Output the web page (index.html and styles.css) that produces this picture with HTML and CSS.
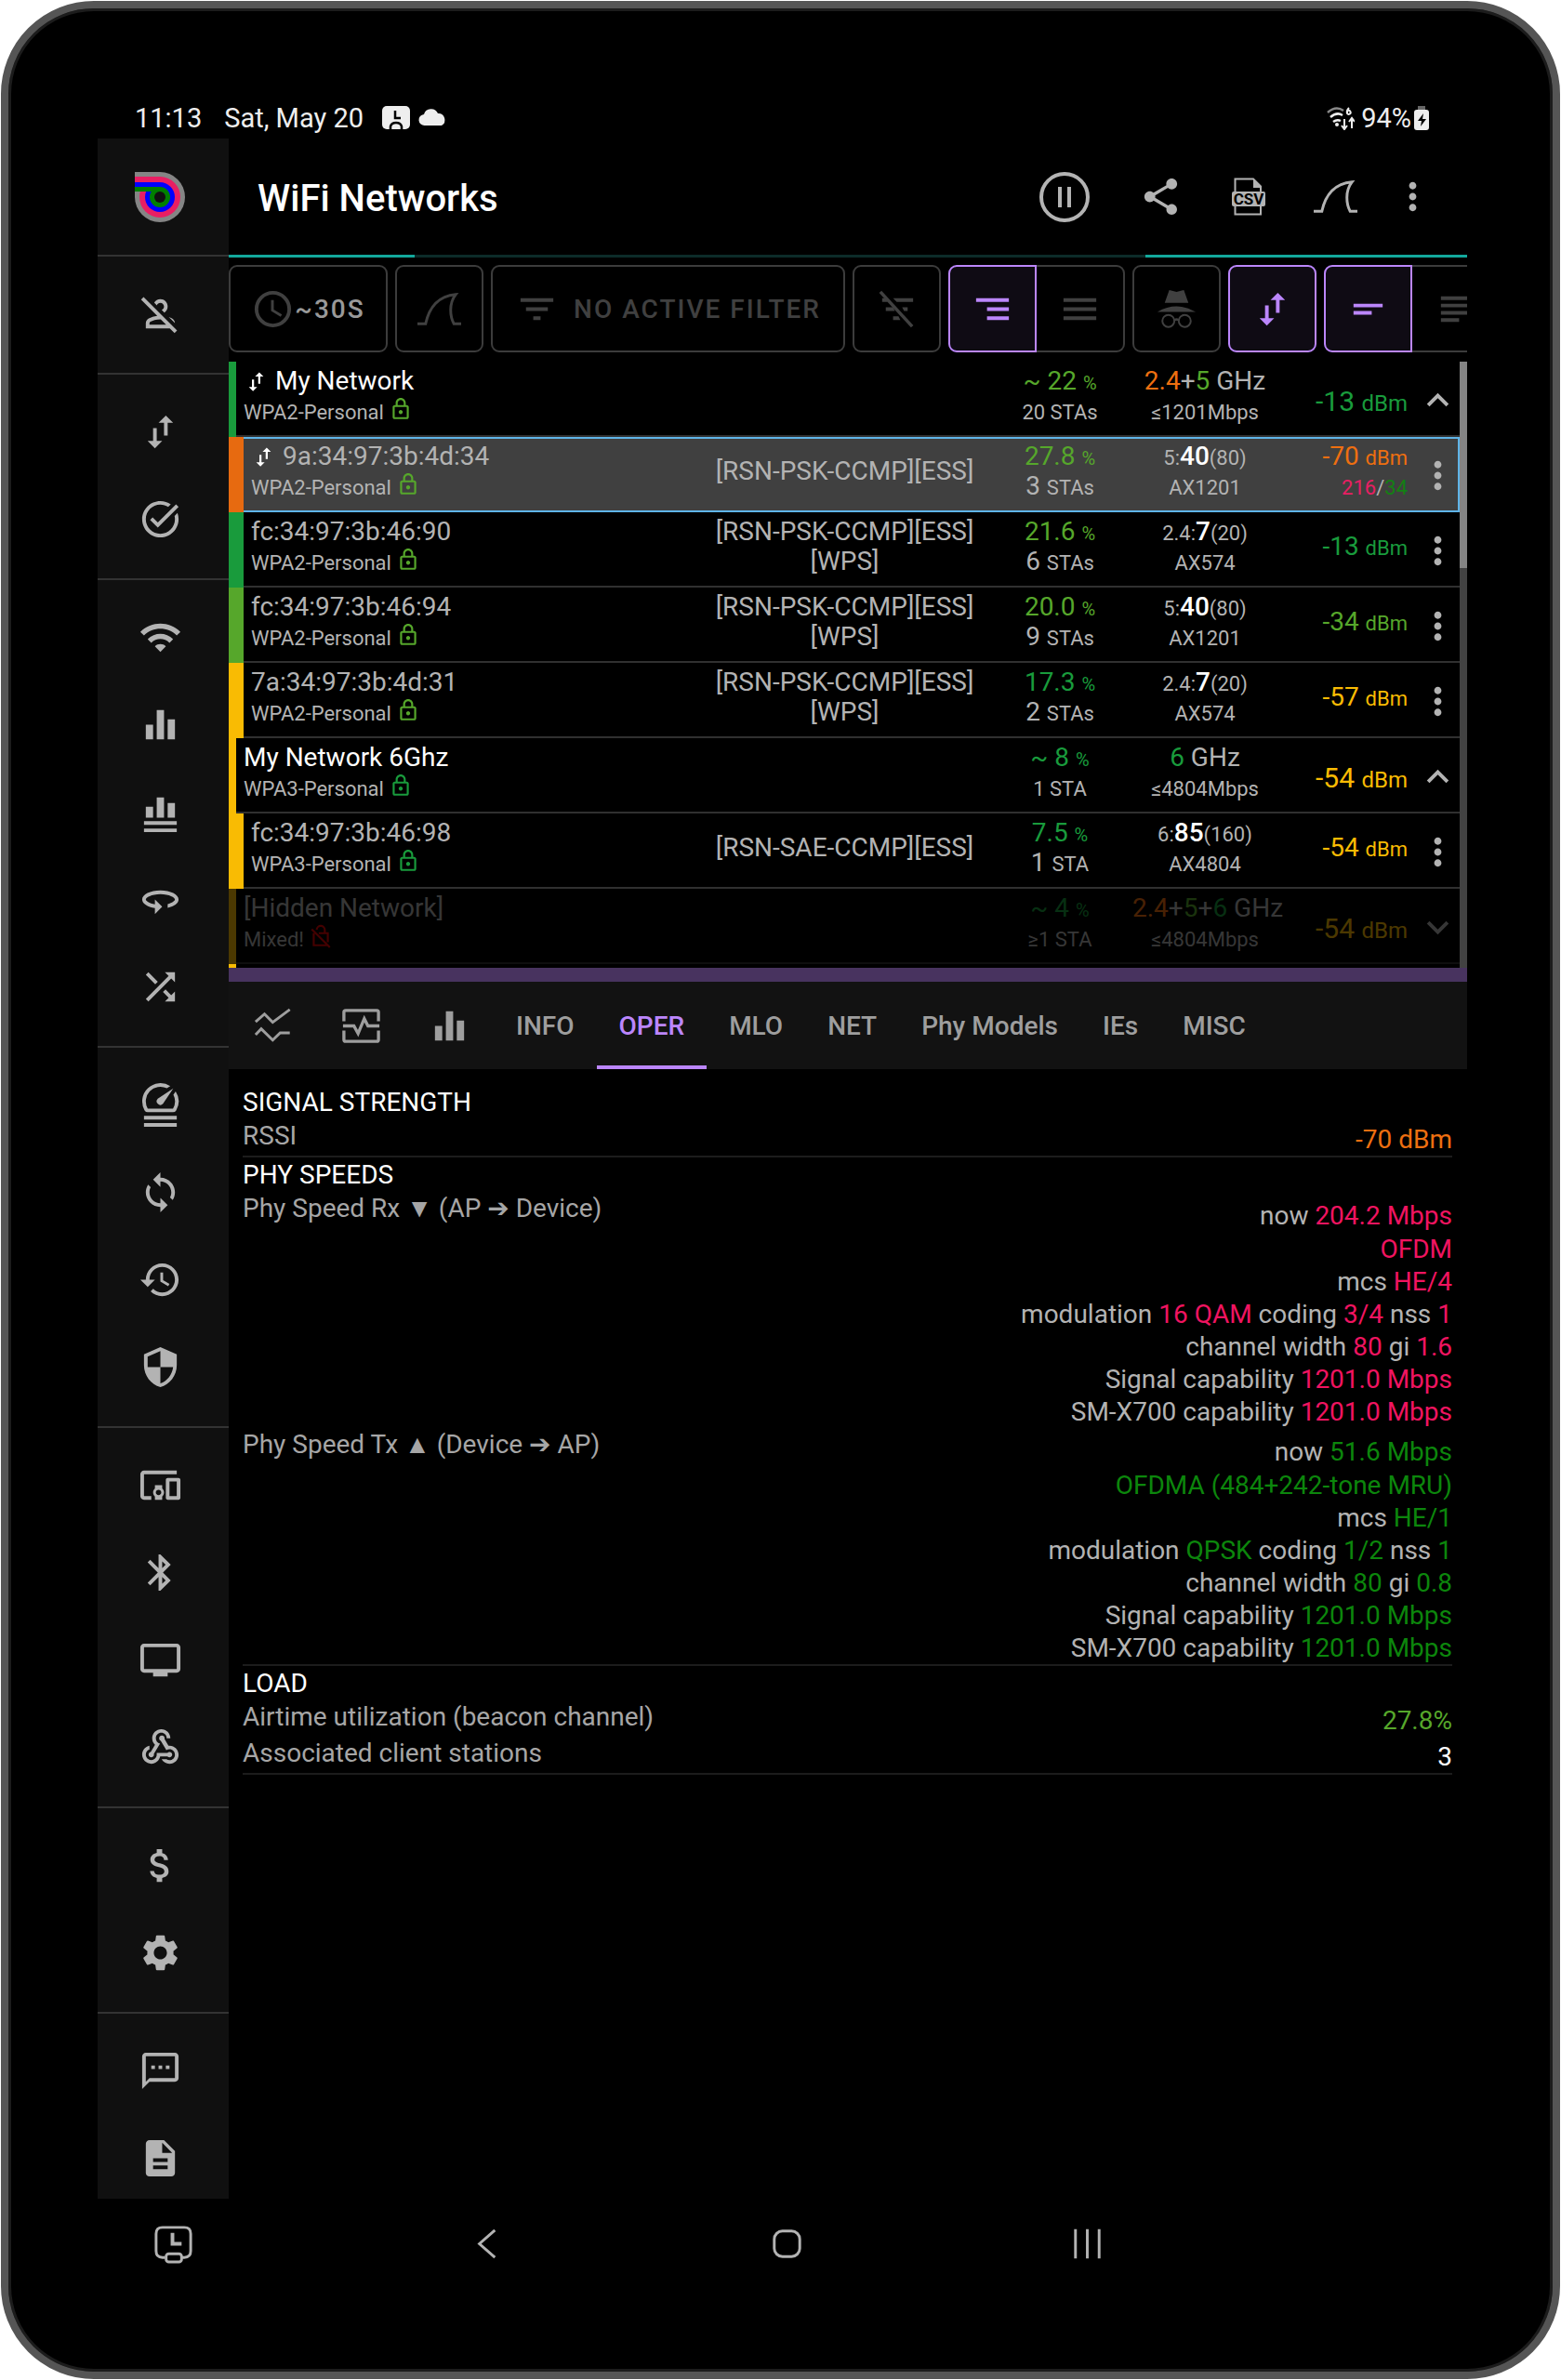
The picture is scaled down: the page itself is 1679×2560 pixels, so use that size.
FILE: index.html
```
<!DOCTYPE html>
<html lang="en">
<head>
    <meta charset="utf-8">
    <title>WiFi Networks</title>
    <link rel="stylesheet" href="styles.css">
</head>
<body>
    <!-- icon sprite -->
    <svg class="sprite">
        <symbol id="person-off" viewBox="0 0 24 24"><path d="M20 17.17l-3.37-3.38c.64.22 1.23.48 1.77.76.97.51 1.58 1.52 1.6 2.62zm1.19 4.02l-1.41 1.41-2.61-2.6H4v-2.78c0-1.12.61-2.15 1.61-2.66 1.29-.66 2.87-1.22 4.67-1.45L1.39 4.22 2.8 2.81l18.39 18.38zM15.17 18l-3-3H12c-2.37 0-4.29.73-5.48 1.34-.32.16-.52.5-.52.88V18h9.17zM12 6c1.1 0 2 .9 2 2 0 .86-.54 1.59-1.3 1.87l1.48 1.48c1.09-.74 1.82-1.99 1.82-3.35 0-2.21-1.79-4-4-4-1.43 0-2.7.76-3.4 1.89l1.48 1.48C10.36 6.57 11.1 6 12 6z"/></symbol>
        <symbol id="swap" viewBox="0 0 24 24"><path d="M15 3l-4 4h3v7h2V7h3zM10 17v-7H8v7H5l4 4 4-4z"/></symbol>
        <symbol id="task" viewBox="0 0 24 24"><path d="M22 5.18L10.59 16.6l-4.24-4.24 1.41-1.41 2.83 2.83 10-10L22 5.18zm-2.21 5.04c.13.57.21 1.17.21 1.78 0 4.42-3.58 8-8 8s-8-3.58-8-8 3.58-8 8-8c1.58 0 3.04.46 4.28 1.25l1.44-1.44C16.1 2.67 14.13 2 12 2 6.48 2 2 6.48 2 12s4.48 10 10 10 10-4.48 10-10c0-1.19-.22-2.33-.6-3.39l-1.61 1.61z"/></symbol>
        <symbol id="wifi" viewBox="0 0 24 24"><path d="M1 9l2 2c4.97-4.97 13.03-4.97 18 0l2-2C16.93 2.93 7.08 2.93 1 9zm8 8l3 3 3-3c-1.65-1.66-4.34-1.66-6 0zm-4-4l2 2c2.76-2.76 7.24-2.76 10 0l2-2C15.14 9.14 8.87 9.14 5 13z"/></symbol>
        <symbol id="bars" viewBox="0 0 24 24"><path d="M10 20h4V4h-4v16zm-6 0h4v-8H4v8zM16 9v11h4V9h-4z"/></symbol>
        <symbol id="bars-list" viewBox="0 0 24 24"><path d="M10 15h4V4h-4zM4 15h4V9H4zM16 7v8h4V7zM3 17h18v2H3zM3 21h18v2H3z"/></symbol>
        <symbol id="rotate" viewBox="0 0 24 24"><path d="M12 7C6.48 7 2 9.24 2 12c0 2.24 2.94 4.13 7 4.77V20l4-4-4-4v2.73c-3.15-.56-5-1.9-5-2.73 0-1.06 3.04-3 8-3s8 1.94 8 3c0 .73-1.46 1.89-4 2.53v2.05c3.53-.77 6-2.53 6-4.58 0-2.76-4.48-5-10-5z"/></symbol>
        <symbol id="shuffle" viewBox="0 0 24 24"><path d="M10.59 9.17L5.41 4 4 5.41l5.17 5.17 1.42-1.41zM14.5 4l2.04 2.04L4 18.59 5.41 20 17.96 7.46 20 9.5V4h-5.5zm.33 9.41l-1.41 1.41 3.13 3.13L14.5 20H20v-5.5l-2.04 2.04-3.13-3.13z"/></symbol>
        <symbol id="speed-list" viewBox="0 0 24 24"><path transform="translate(0 -4)" d="M20.38 8.57l-1.23 1.85a8 8 0 0 1-.22 7.58H5.07A8 8 0 0 1 15.58 6.85l1.85-1.23A10 10 0 0 0 3.35 19a2 2 0 0 0 1.72 1h13.85a2 2 0 0 0 1.74-1 10 10 0 0 0-.27-10.44zm-9.79 6.84a2 2 0 0 0 2.83 0l5.66-8.49-8.49 5.66a2 2 0 0 0 0 2.83z"/><path d="M3 18h18v2H3zM3 22h18v2H3z"/></symbol>
        <symbol id="sync" viewBox="0 0 24 24"><path d="M12 4V1L8 5l4 4V6c3.31 0 6 2.69 6 6 0 1.01-.25 1.97-.7 2.8l1.46 1.46C19.54 15.03 20 13.57 20 12c0-4.42-3.58-8-8-8zm0 14c-3.31 0-6-2.69-6-6 0-1.01.25-1.97.7-2.8L5.24 7.74C4.46 8.97 4 10.43 4 12c0 4.42 3.58 8 8 8v3l4-4-4-4v3z"/></symbol>
        <symbol id="history" viewBox="0 0 24 24"><path d="M13 3c-4.97 0-9 4.03-9 9H1l3.89 3.89.07.14L9 12H6c0-3.87 3.13-7 7-7s7 3.13 7 7-3.13 7-7 7c-1.93 0-3.68-.79-4.94-2.06l-1.42 1.42C8.27 19.99 10.51 21 13 21c4.97 0 9-4.03 9-9s-4.03-9-9-9zm-1 5v5l4.28 2.54.72-1.21-3.5-2.08V8H12z"/></symbol>
        <symbol id="shield" viewBox="0 0 24 24"><path d="M12 1L3 5v6c0 5.55 3.84 10.74 9 12 5.16-1.26 9-6.45 9-12V5l-9-4zm0 10.99h7c-.53 4.12-3.28 7.79-7 8.94V12H5V6.3l7-3.11v8.8z"/></symbol>
        <symbol id="devices" viewBox="0 0 24 24"><path d="M3 6h18V4H3c-1.1 0-2 .9-2 2v12c0 1.1.9 2 2 2h4v-2H3V6zm10 6H9v1.78c-.61.55-1 1.33-1 2.22s.39 1.67 1 2.22V20h4v-1.78c.61-.55 1-1.34 1-2.22s-.39-1.67-1-2.22V12zm-2 5.5c-.83 0-1.5-.67-1.5-1.5s.67-1.5 1.5-1.5 1.5.67 1.5 1.5-.67 1.5-1.5 1.5zM22 8h-6c-.5 0-1 .5-1 1v10c0 .5.5 1 1 1h6c.5 0 1-.5 1-1V9c0-.5-.5-1-1-1zm-1 10h-4v-8h4v8z"/></symbol>
        <symbol id="bluetooth" viewBox="0 0 24 24"><path d="M17.71 7.71L12 2h-1v7.59L6.41 5 5 6.41 10.59 12 5 17.59 6.41 19 11 14.41V22h1l5.71-5.71-4.3-4.29 4.3-4.29zM13 5.83l1.88 1.88L13 9.59V5.83zm1.88 10.46L13 18.17v-3.76l1.88 1.88z"/></symbol>
        <symbol id="monitor" viewBox="0 0 24 24"><path d="M21 3H3c-1.1 0-2 .9-2 2v12c0 1.1.9 2 2 2h5v2h8v-2h5c1.1 0 2-.9 2-2V5c0-1.1-.9-2-2-2zm0 14H3V5h18v12z"/></symbol>
        <symbol id="webhook" viewBox="0 0 24 24"><path d="M10 15h5.88c.27-.31.67-.5 1.12-.5.83 0 1.5.67 1.5 1.5s-.67 1.5-1.5 1.5c-.44 0-.84-.19-1.12-.5H11.9c-.46 2.28-2.48 4-4.9 4-2.76 0-5-2.24-5-5 0-2.42 1.72-4.44 4-4.9v2.07c-1.16.41-2 1.53-2 2.83 0 1.65 1.35 3 3 3s3-1.35 3-3v-1zm2.5-11c1.65 0 3 1.35 3 3h2c0-2.76-2.24-5-5-5s-5 2.24-5 5c0 1.43.6 2.71 1.55 3.62l-2.35 3.9c-.68.14-1.2.75-1.2 1.48 0 .83.67 1.5 1.5 1.5s1.5-.67 1.5-1.5c0-.16-.02-.31-.07-.45l3.38-5.63C10.49 9.61 9.5 8.42 9.5 7c0-1.65 1.35-3 3-3zm4.5 9c-.64 0-1.23.2-1.72.54l-3.05-5.07c-.53-.28-.9-.83-.9-1.47 0-.83.67-1.5 1.5-1.5s1.5.67 1.5 1.5c0 .15-.02.29-.06.43l2.19 3.65c.18-.02.36-.03.54-.03 2.76 0 5 2.24 5 5s-2.24 5-5 5c-1.85 0-3.47-1.01-4.33-2.5h2.67c.48.32 1.05.5 1.66.5 1.65 0 3-1.35 3-3s-1.35-3-3-3z"/></symbol>
        <symbol id="money" viewBox="0 0 24 24"><path d="M11.8 10.9c-2.27-.59-3-1.2-3-2.15 0-1.09 1.01-1.85 2.7-1.85 1.78 0 2.44.85 2.5 2.1h2.21c-.07-1.72-1.12-3.3-3.21-3.81V3h-3v2.16c-1.94.42-3.5 1.68-3.5 3.61 0 2.31 1.91 3.46 4.7 4.13 2.5.6 3 1.48 3 2.41 0 .69-.49 1.79-2.7 1.79-2.06 0-2.87-.92-2.98-2.1h-2.2c.12 2.19 1.76 3.42 3.68 3.83V21h3v-2.15c1.95-.37 3.5-1.5 3.5-3.55 0-2.84-2.43-3.81-4.7-4.4z"/></symbol>
        <symbol id="settings" viewBox="0 0 24 24"><path d="M19.14 12.94c.04-.3.06-.61.06-.94 0-.32-.02-.64-.07-.94l2.03-1.58c.18-.14.23-.41.12-.61l-1.92-3.32c-.12-.22-.37-.29-.59-.22l-2.39.96c-.5-.38-1.03-.7-1.62-.94l-.36-2.54c-.04-.24-.24-.41-.48-.41h-3.84c-.24 0-.43.17-.47.41l-.36 2.54c-.59.24-1.13.57-1.62.94l-2.39-.96c-.22-.08-.47 0-.59.22L2.74 8.87c-.12.21-.08.47.12.61l2.03 1.58c-.05.3-.09.63-.09.94s.02.64.07.94l-2.03 1.58c-.18.14-.23.41-.12.61l1.92 3.32c.12.22.37.29.59.22l2.39-.96c.5.38 1.03.7 1.62.94l.36 2.54c.05.24.24.41.48.41h3.84c.24 0 .44-.17.47-.41l.36-2.54c.59-.24 1.13-.56 1.62-.94l2.39.96c.22.08.47 0 .59-.22l1.92-3.32c.12-.22.07-.47-.12-.61l-2.01-1.58zM12 15.6c-1.98 0-3.6-1.62-3.6-3.6s1.62-3.6 3.6-3.6 3.6 1.62 3.6 3.6-1.62 3.6-3.6 3.6z"/></symbol>
        <symbol id="chat" viewBox="0 0 24 24"><path d="M20 2H4c-1.1 0-2 .9-2 2v18l4-4h14c1.1 0 2-.9 2-2V4c0-1.1-.9-2-2-2zm0 14H6l-2 2V4h16v12zM7 9h2v2H7zm4 0h2v2h-2zm4 0h2v2h-2z"/></symbol>
        <symbol id="doc" viewBox="0 0 24 24"><path d="M14 2H6c-1.1 0-1.99.9-1.99 2L4 20c0 1.1.89 2 1.99 2H18c1.1 0 2-.9 2-2V8l-6-6zm2 16H8v-2h8v2zm0-4H8v-2h8v2zm-3-5V3.5L18.5 9H13z"/></symbol>
        <symbol id="share" viewBox="0 0 24 24"><path d="M18 16.08c-.76 0-1.44.3-1.96.77L8.91 12.7c.05-.23.09-.46.09-.7s-.04-.47-.09-.7l7.05-4.11c.54.5 1.25.81 2.04.81 1.66 0 3-1.34 3-3s-1.34-3-3-3-3 1.34-3 3c0 .24.04.47.09.7L8.04 9.81C7.5 9.31 6.79 9 6 9c-1.66 0-3 1.34-3 3s1.34 3 3 3c.79 0 1.5-.31 2.04-.81l7.12 4.16c-.05.21-.08.43-.08.65 0 1.61 1.31 2.92 2.92 2.92s2.92-1.31 2.92-2.92-1.31-2.92-2.92-2.92z"/></symbol>
        <symbol id="more" viewBox="0 0 24 24"><path d="M12 8c1.1 0 2-.9 2-2s-.9-2-2-2-2 .9-2 2 .9 2 2 2zm0 2c-1.1 0-2 .9-2 2s.9 2 2 2 2-.9 2-2-.9-2-2-2zm0 6c-1.1 0-2 .9-2 2s.9 2 2 2 2-.9 2-2-.9-2-2-2z"/></symbol>
        <symbol id="less" viewBox="0 0 24 24"><path d="M12 8l-6 6 1.41 1.41L12 10.83l4.59 4.58L18 14z"/></symbol>
        <symbol id="expand" viewBox="0 0 24 24"><path d="M16.59 8.59L12 13.17 7.41 8.59 6 10l6 6 6-6z"/></symbol>
        <symbol id="lock" viewBox="0 0 24 24"><path d="M18 8h-1V6c0-2.76-2.24-5-5-5S7 3.24 7 6v2H6c-1.1 0-2 .9-2 2v10c0 1.1.9 2 2 2h12c1.1 0 2-.9 2-2V10c0-1.1-.9-2-2-2zM9 6c0-1.66 1.34-3 3-3s3 1.34 3 3v2H9V6zm9 14H6V10h12v10zm-6-3c1.1 0 2-.9 2-2s-.9-2-2-2-2 .9-2 2 .9 2 2 2z"/></symbol>
        <symbol id="no-lock" viewBox="0 0 24 24"><path d="M5 9v12h14M10 9h9v9M8 5.5a4 4 0 0 1 8 .5v3M3 5l18 18" fill="none" stroke="currentColor" stroke-width="2"/></symbol>
        <symbol id="fin" viewBox="0 0 48 36"><path d="M0 34h9C13 16 22 4 42 2C34 12 36 27 40 34h8" fill="none" stroke="currentColor" stroke-width="3"/></symbol>
        <symbol id="clock" viewBox="0 0 24 24"><path d="M12 2a10 10 0 1 0 0 20 10 10 0 0 0 0-20zm0 18a8 8 0 1 1 0-16 8 8 0 0 1 0 16zm.5-13H11v6l5.25 3.15.75-1.23-4.5-2.67z"/></symbol>
        <symbol id="filter" viewBox="0 0 24 24"><path d="M10 18h4v-2h-4v2zM3 6v2h18V6H3zm3 7h12v-2H6v2z"/></symbol>
        <symbol id="filter-off" viewBox="0 0 24 24"><path d="M10 6h11v2h-9zM4 6h2l1 2H4zM15 11h3v2h-2zM6 11h4l1 2H6zM10 16h3l1 2h-4z"/><path d="M3 2.5L20.5 21.5" stroke="currentColor" stroke-width="1.8"/></symbol>
        <symbol id="align-right" viewBox="0 0 24 24"><path d="M3 6h18v2H3zM9 11h12v2H9zM9 16h12v2H9z"/></symbol>
        <symbol id="menu" viewBox="0 0 24 24"><path d="M3 6h18v2H3zM3 11h18v2H3zM3 16h18v2H3z"/></symbol>
        <symbol id="incognito" viewBox="0 0 24 24"><path d="M8 1.5l4 1 4-1 2.500 7h-13zM1.500 13.500Q12 7.500 22.500 13.500z"/><path d="M11 18q1-.8 2 0" fill="none" stroke="currentColor" stroke-width="1.2"/><circle cx="7.5" cy="18.5" r="3.3" fill="none" stroke="currentColor" stroke-width="1"/><circle cx="16.5" cy="18.5" r="3.3" fill="none" stroke="currentColor" stroke-width="1"/></symbol>
        <symbol id="short-text" viewBox="0 0 24 24"><path d="M4 9h16v2H4zM4 13h10v2H4z"/></symbol>
        <symbol id="long-text" viewBox="0 0 24 24"><path d="M14 17H4v2h10v-2zm6-8H4v2h16V9zM4 15h16v-2H4v2zM4 5v2h16V5H4z"/></symbol>
    </svg>

    <div class="device">
        <div class="status">
            <span>11:13</span>
            <span class="date">Sat, May 20</span>
            <svg class="tray" viewBox="0 0 30 26"><rect width="30" height="25" rx="5" fill="#eee"/><path d="M14 5v8h6M9 25v-3q1-4 6-4t6 4v3" fill="none" stroke="#000" stroke-width="2.5"/></svg>
            <svg class="tray cloud" viewBox="0 0 30 26"><path d="M7 21a6 6 0 0 1-1-12 8 8 0 0 1 15-1 7 7 0 0 1 4 13z" fill="#eee"/></svg>
            <div class="right">
                <svg class="tray" viewBox="0 0 30 26"><g fill="none" stroke="#eee" stroke-width="2.5"><path d="M1 7Q10-1 18 5" stroke="#888"/><path d="M4 12q7-6 13-2M7 17q4-3 8-1"/><path d="M19 14v10M16 21l3 4 3-4M27 24V14M24 17l3-4 3 4" stroke-width="2"/><path d="M24 2q-3 3-2 6a2 2 0 1 0 1-3" stroke-width="2"/></g><circle cx="11" cy="20" r="2" fill="#eee"/></svg>
                <span>94%</span>
                <svg class="battery" viewBox="0 0 18 26"><rect x="5" width="8" height="5" fill="#666"/><rect x="1" y="4" width="16" height="22" rx="3" fill="#eee"/><path d="M11 8L5 16h4l-1 6 6-8h-4z" fill="#000"/></svg>
            </div>
        </div>

        <div class="app">
            <nav class="sidebar">
                <a href="#" class="logo" aria-label="Home">
                    <svg viewBox="0 0 54 54">
                        <rect width="27" height="27" fill="#858585"/><circle cx="27" cy="27" r="27" fill="#858585"/>
                        <circle cx="27" cy="27" r="22" fill="#e91e63"/><circle cx="27" cy="27" r="16" fill="#00f"/><circle cx="27" cy="27" r="11" fill="green"/>
                        <circle cx="27" cy="27" r="6" fill="#111"/>
                        <path d="M0 5h27v6H0z" fill="#e91e63"/><path d="M0 11h27v5H0z" fill="#00f"/><path d="M0 16h27v5H0z" fill="green"/>
                    </svg>
                </a>
                <div class="group">
                    <a href="#" aria-label="Account"><svg><use href="#person-off"/></svg></a>
                </div>
                <div class="group">
                    <a href="#" aria-label="Traffic"><svg><use href="#swap"/></svg></a>
                    <a href="#" aria-label="Checks"><svg><use href="#task"/></svg></a>
                </div>
                <div class="group">
                    <a href="#" aria-label="WiFi"><svg><use href="#wifi"/></svg></a>
                    <a href="#" aria-label="Channels"><svg><use href="#bars"/></svg></a>
                    <a href="#" aria-label="Channel list"><svg><use href="#bars-list"/></svg></a>
                    <a href="#" aria-label="Rotate"><svg><use href="#rotate"/></svg></a>
                    <a href="#" aria-label="Roaming"><svg><use href="#shuffle"/></svg></a>
                </div>
                <div class="group">
                    <a href="#" aria-label="Speed test"><svg><use href="#speed-list"/></svg></a>
                    <a href="#" aria-label="Sync"><svg><use href="#sync"/></svg></a>
                    <a href="#" aria-label="History"><svg><use href="#history"/></svg></a>
                    <a href="#" aria-label="Security"><svg><use href="#shield"/></svg></a>
                </div>
                <div class="group">
                    <a href="#" aria-label="Devices"><svg><use href="#devices"/></svg></a>
                    <a href="#" aria-label="Bluetooth"><svg><use href="#bluetooth"/></svg></a>
                    <a href="#" aria-label="Screen"><svg><use href="#monitor"/></svg></a>
                    <a href="#" aria-label="Webhooks"><svg><use href="#webhook"/></svg></a>
                </div>
                <div class="group">
                    <a href="#" aria-label="Purchase"><svg><use href="#money"/></svg></a>
                    <a href="#" aria-label="Settings"><svg><use href="#settings"/></svg></a>
                </div>
                <div class="group">
                    <a href="#" aria-label="Feedback"><svg><use href="#chat"/></svg></a>
                    <a href="#" aria-label="Docs"><svg><use href="#doc"/></svg></a>
                </div>
            </nav>

            <main>
                <header>
                    <h1>WiFi Networks</h1>
                    <button class="pause" aria-label="Pause"><svg viewBox="0 0 54 54"><circle cx="27" cy="27" r="25" fill="none" stroke="currentColor" stroke-width="4"/><path d="M22 16v22M32 16v22" stroke="currentColor" stroke-width="4"/></svg></button>
                    <button aria-label="Share"><svg><use href="#share"/></svg></button>
                    <button aria-label="Export CSV"><svg viewBox="0 0 47 47"><path d="M9.500 20V4.500H29l8 8V20M9.500 34v8.500H37V34" fill="none" stroke="currentColor" stroke-width="2"/><path d="M29 4l9 10h-9z"/><rect x="6" y="18" width="36" height="16" rx="2"/><text x="24" y="32" text-anchor="middle" class="csv">CSV</text></svg></button>
                    <button aria-label="Capture"><svg><use href="#fin"/></svg></button>
                    <button class="menu" aria-label="More"><svg><use href="#more"/></svg></button>
                </header>
                <div class="progress"><span></span><span class="idle"></span><span></span></div>

                <div class="toolbar">
                    <button class="time"><svg><use href="#clock"/></svg>~30S</button>
                    <button aria-label="Capture"><svg><use href="#fin"/></svg></button>
                    <button class="wide"><svg><use href="#filter"/></svg>NO ACTIVE FILTER</button>
                    <button aria-label="Clear filter"><svg><use href="#filter-off"/></svg></button>
                    <button class="on first" aria-label="Tree"><svg><use href="#align-right"/></svg></button>
                    <button class="last" aria-label="Flat"><svg><use href="#menu"/></svg></button>
                    <button aria-label="Anonymous"><svg><use href="#incognito"/></svg></button>
                    <button class="on" aria-label="Connected first"><svg><use href="#swap"/></svg></button>
                    <button class="on first" aria-label="Compact"><svg><use href="#short-text"/></svg></button>
                    <button class="last" aria-label="Detailed"><svg><use href="#long-text"/></svg></button>
                </div>

                <div class="list">
                    <table>
                        <colgroup><col><col class="c-caps"><col class="c-mid"><col class="c-mid"><col class="c-dbm"><col class="c-act"></colgroup>
                        <tr class="net">
                            <td class="name bar-green"><b><svg class="sw"><use href="#swap"/></svg> My Network</b><br><small>WPA2-Personal <svg class="lock lime"><use href="#lock"/></svg></small></td>
                            <td></td>
                            <td class="lime">~ 22 <i>%</i><br><small class="gray">20 STAs</small></td>
                            <td><span class="orange">2.4</span>+<span class="lime">5</span> GHz<br><small>≤1201Mbps</small></td>
                            <td class="dbm green">-13 <small>dBm</small></td>
                            <td class="act"><svg><use href="#less"/></svg></td>
                        </tr>
                        <tr class="selected">
                            <td class="name bar-orange"><svg class="sw"><use href="#swap"/></svg> 9a:34:97:3b:4d:34<br><small>WPA2-Personal <svg class="lock lime"><use href="#lock"/></svg></small></td>
                            <td>[RSN-PSK-CCMP][ESS]</td>
                            <td class="lime">27.8 <i>%</i><br><span class="gray">3 <small>STAs</small></span></td>
                            <td><small>5:</small><em>40</em><small>(80)</small><br><small>AX1201</small></td>
                            <td class="dbm orange">-70 <small>dBm</small><br><small><span class="pink">216</span><span class="gray">/</span><span class="dark">34</span></small></td>
                            <td class="act"><svg><use href="#more"/></svg></td>
                        </tr>
                        <tr>
                            <td class="name bar-green">fc:34:97:3b:46:90<br><small>WPA2-Personal <svg class="lock lime"><use href="#lock"/></svg></small></td>
                            <td>[RSN-PSK-CCMP][ESS]<br>[WPS]</td>
                            <td class="lime">21.6 <i>%</i><br><span class="gray">6 <small>STAs</small></span></td>
                            <td><small>2.4:</small><em>7</em><small>(20)</small><br><small>AX574</small></td>
                            <td class="dbm green">-13 <small>dBm</small></td>
                            <td class="act"><svg><use href="#more"/></svg></td>
                        </tr>
                        <tr>
                            <td class="name bar-lime">fc:34:97:3b:46:94<br><small>WPA2-Personal <svg class="lock lime"><use href="#lock"/></svg></small></td>
                            <td>[RSN-PSK-CCMP][ESS]<br>[WPS]</td>
                            <td class="lime">20.0 <i>%</i><br><span class="gray">9 <small>STAs</small></span></td>
                            <td><small>5:</small><em>40</em><small>(80)</small><br><small>AX1201</small></td>
                            <td class="dbm lime">-34 <small>dBm</small></td>
                            <td class="act"><svg><use href="#more"/></svg></td>
                        </tr>
                        <tr>
                            <td class="name bar-yellow">7a:34:97:3b:4d:31<br><small>WPA2-Personal <svg class="lock lime"><use href="#lock"/></svg></small></td>
                            <td>[RSN-PSK-CCMP][ESS]<br>[WPS]</td>
                            <td class="green">17.3 <i>%</i><br><span class="gray">2 <small>STAs</small></span></td>
                            <td><small>2.4:</small><em>7</em><small>(20)</small><br><small>AX574</small></td>
                            <td class="dbm yellow">-57 <small>dBm</small></td>
                            <td class="act"><svg><use href="#more"/></svg></td>
                        </tr>
                        <tr class="net">
                            <td class="name bar-yellow"><b>My Network 6Ghz</b><br><small>WPA3-Personal <svg class="lock green"><use href="#lock"/></svg></small></td>
                            <td></td>
                            <td class="green">~ 8 <i>%</i><br><small class="gray">1 STA</small></td>
                            <td><span class="green">6</span> GHz<br><small>≤4804Mbps</small></td>
                            <td class="dbm yellow">-54 <small>dBm</small></td>
                            <td class="act"><svg><use href="#less"/></svg></td>
                        </tr>
                        <tr>
                            <td class="name bar-yellow">fc:34:97:3b:46:98<br><small>WPA3-Personal <svg class="lock green"><use href="#lock"/></svg></small></td>
                            <td>[RSN-SAE-CCMP][ESS]</td>
                            <td class="green">7.5 <i>%</i><br><span class="gray">1 <small>STA</small></span></td>
                            <td><small>6:</small><em>85</em><small>(160)</small><br><small>AX4804</small></td>
                            <td class="dbm yellow">-54 <small>dBm</small></td>
                            <td class="act"><svg><use href="#more"/></svg></td>
                        </tr>
                        <tr class="net faded">
                            <td class="name bar-yellow">[Hidden Network]<br><small>Mixed! <svg class="lock red"><use href="#no-lock"/></svg></small></td>
                            <td></td>
                            <td class="green">~ 4 <i>%</i><br><small class="gray">≥1 STA</small></td>
                            <td><span class="orange">2.4</span>+<span class="lime">5</span>+<span class="green">6</span> GHz<br><small>≤4804Mbps</small></td>
                            <td class="dbm yellow">-54 <small>dBm</small></td>
                            <td class="act"><svg><use href="#expand"/></svg></td>
                        </tr>
                        <tr class="net">
                            <td class="name bar-yellow"></td>
                            <td colspan="5"></td>
                        </tr>
                    </table>
                    <div class="scrollbar"><div class="thumb"></div></div>
                </div>

                <div class="tabs">
                    <button aria-label="Charts"><svg viewBox="0 0 24 24"><path d="M2.5 9.8l4.9-4.3 4.5 4.5 9.4-7M2.5 16.8l3.1-3.2 6.3 6.2 4.1-4h5.3" fill="none" stroke="currentColor" stroke-width="1.5"/></svg></button>
                    <button aria-label="Live"><svg viewBox="0 0 24 24"><path d="M2.5 9.5v-5q0-1 1-1h17q1 0 1 1v5M2.5 14.5v5q0 1 1 1h17q1 0 1-1v-5M2 12h6l2.3 4.2 3.4-8.2 2 4H22" fill="none" stroke="currentColor" stroke-width="1.7"/></svg></button>
                    <button aria-label="Channels"><svg><use href="#bars"/></svg></button>
                    <button>INFO</button>
                    <button class="active">OPER</button>
                    <button>MLO</button>
                    <button>NET</button>
                    <button>Phy Models</button>
                    <button>IEs</button>
                    <button>MISC</button>
                </div>

                <div class="details">
                    <section>
                        <h2>SIGNAL STRENGTH</h2>
                        <dl>
                            <dt>RSSI</dt>
                            <dd class="orange">-70 dBm</dd>
                        </dl>
                    </section>
                    <section>
                        <h2>PHY SPEEDS</h2>
                        <dl>
                            <dt>Phy Speed Rx ▼ (AP ➔ Device)</dt>
                            <dd class="phy rx">
                                <p>now <span>204.2 Mbps</span></p>
                                <p><span>OFDM</span></p>
                                <p>mcs <span>HE/4</span></p>
                                <p>modulation <span>16 QAM</span> coding <span>3/4</span> nss <span>1</span></p>
                                <p>channel width <span>80</span> gi <span>1.6</span></p>
                                <p>Signal capability <span>1201.0 Mbps</span></p>
                                <p>SM-X700 capability <span>1201.0 Mbps</span></p>
                            </dd>
                        </dl>
                        <dl>
                            <dt>Phy Speed Tx ▲ (Device ➔ AP)</dt>
                            <dd class="phy tx">
                                <p>now <span>51.6 Mbps</span></p>
                                <p><span>OFDMA (484+242-tone MRU)</span></p>
                                <p>mcs <span>HE/1</span></p>
                                <p>modulation <span>QPSK</span> coding <span>1/2</span> nss <span>1</span></p>
                                <p>channel width <span>80</span> gi <span>0.8</span></p>
                                <p>Signal capability <span>1201.0 Mbps</span></p>
                                <p>SM-X700 capability <span>1201.0 Mbps</span></p>
                            </dd>
                        </dl>
                    </section>
                    <section>
                        <h2>LOAD</h2>
                        <dl>
                            <dt>Airtime utilization (beacon channel)</dt>
                            <dd class="lime">27.8%</dd>
                        </dl>
                        <dl>
                            <dt>Associated client stations</dt>
                            <dd class="white">3</dd>
                        </dl>
                    </section>
                </div>
            </main>
        </div>

        <div class="navbar">
            <button class="dock" aria-label="Dock"><svg viewBox="0 0 48 48"><path d="M15 39h-3q-7 0-7-7V13q0-7 7-7h24q7 0 7 7v19q0 7-7 7h-3" fill="none" stroke="currentColor" stroke-width="3"/><rect x="16" y="35" width="17" height="9" rx="3" fill="none" stroke="currentColor" stroke-width="3"/><path d="M23 12v12h10" fill="none" stroke="currentColor" stroke-width="4"/></svg></button>
            <button aria-label="Back"><svg viewBox="0 0 48 48"><path d="M33 9L16 24l17 15" fill="none" stroke="currentColor" stroke-width="3"/></svg></button>
            <button aria-label="Home"><svg viewBox="0 0 48 48"><rect x="10" y="10" width="28" height="28" rx="9" fill="none" stroke="currentColor" stroke-width="3"/></svg></button>
            <button aria-label="Recents"><svg viewBox="0 0 48 48"><path d="M11 8v32M24 8v32M37 8v32" stroke="currentColor" stroke-width="3"/></svg></button>
        </div>
    </div>
</body>
</html>
```
FILE: styles.css
```
*{
    box-sizing: border-box;
}

body{
    margin: 0;
    background: #fff;
    color: #b3b3b3;
    font-family: Roboto, "Liberation Sans", "DejaVu Sans", sans-serif;
    font-size: 28px;
}

h1, h2, p, dl, dd{
    margin: 0;
}

button{
    background: none;
    border: 0;
    margin: 0;
    padding: 0;
    color: inherit;
    font-family: inherit;
    font-size: 28px;
    font-weight: 500;
}

a{
    color: inherit;
}

svg{
    width: 47px;
    height: 47px;
    fill: currentColor;
    flex: none;
}

.sprite{
    display: none;
}

.device{
    display: flex;
    flex-direction: column;
    height: calc(100vh - 2px);
    margin: 1px;
    padding: 96px 92px 92px 96px;
    background: #000;
    border: 8px solid #555;
    border-radius: 100px;
    box-shadow: inset 0 0 0 3px #1c1c1c;
}

/* status bar */
.status{
    display: flex;
    align-items: center;
    height: 44px;
    flex: none;
    padding: 0 40px;
    color: #eee;
    font-size: 29px;
}

.date{
    margin: 0 20px 0 24px;
}

.tray{
    width: 30px;
    height: 26px;
}

.cloud{
    margin-left: 9px;
}

.right{
    display: flex;
    align-items: center;
    margin-left: auto;
}

.right span{
    margin: 0 2px 0 7px;
}

.battery{
    width: 18px;
    height: 26px;
}

.app{
    display: flex;
    flex: 1;
    min-height: 0;
}

/* left rail */
.sidebar{
    width: 141px;
    flex: none;
    background: #101010;
    overflow: hidden;
}

.sidebar a{
    display: flex;
    align-items: center;
    justify-content: center;
    height: 94px;
    padding-right: 7px;
}

.sidebar .logo{
    height: 125px;
}

.logo svg{
    width: 54px;
    height: 54px;
}

.group{
    border-top: 2px solid #333;
    padding: 14px 0 17px;
}

main{
    flex: 1;
    min-width: 0;
}

header{
    display: flex;
    align-items: center;
    height: 125px;
    padding: 0 23px 0 31px;
}

h1{
    flex: 1;
    padding-top: 3px;
    color: #fff;
    font-size: 40px;
    font-weight: 500;
}

header button{
    display: flex;
    justify-content: center;
    width: 94px;
}

header .pause{
    width: 112px;
}

.pause svg{
    width: 54px;
    height: 54px;
}

header .menu{
    width: 72px;
}

.csv{
    font-size: 17px;
    font-weight: 700;
    fill: #000;
}

.progress{
    display: flex;
    height: 3px;
    background: #0c2b29;
}

.progress span{
    flex: 15;
    background: #13a89c;
}

.progress .idle{
    flex: 59;
    background: none;
}

.progress span:last-child{
    flex: 26;
}

/* toolbar */
.toolbar{
    display: flex;
    gap: 8px;
    padding: 8px 0 10px;
    overflow: hidden;
}

.toolbar button{
    display: flex;
    align-items: center;
    justify-content: center;
    width: 95px;
    height: 94px;
    flex: none;
    border: 2px solid #3c3c3c;
    border-radius: 9px;
    color: #404040;
    letter-spacing: 2px;
}

.toolbar .time{
    width: 171px;
    color: #999;
}

.time svg{
    color: #404040;
}

.toolbar .wide{
    width: 381px;
    gap: 16px;
}

.toolbar .on{
    background: #0f0b14;
    border-color: #bb86fc;
    color: #bb86fc;
}

.toolbar .first{
    border-radius: 9px 0 0 9px;
}

.toolbar .last{
    margin-left: -8px;
    border-left: 0;
    border-radius: 0 9px 9px 0;
}

/* network list */
.list{
    display: flex;
    max-height: 652px;
    overflow: hidden;
}

table{
    flex: 1;
    width: 100%;
    table-layout: fixed;
    border-collapse: separate;
    border-spacing: 0;
}

.c-caps{
    width: 307px;
}

.c-mid{
    width: 156px;
}

.c-dbm{
    width: 148px;
}

.c-act{
    width: 48px;
}

td{
    height: 81px;
    padding: 5px 0 10px;
    border-bottom: 2px solid #303030;
    line-height: 32px;
    text-align: center;
    white-space: nowrap;
}

td small{
    font-size: 22px;
    line-height: 1;
}

td i{
    font-size: 20px;
    font-style: normal;
    line-height: 1;
}

td em{
    color: #fff;
    font-style: normal;
    font-weight: 500;
}

td b{
    color: #fff;
    font-weight: 400;
}

.name{
    position: relative;
    padding-left: 24px;
    text-align: left;
}

.net .name{
    padding-left: 16px;
}

.name::before{
    content: "";
    position: absolute;
    top: 0;
    left: 0;
    width: 16px;
    height: 81px;
    background: var(--bar);
}

.net .name::before{
    width: 8px;
}

.dbm{
    padding-right: 8px;
    text-align: right;
}

.net .dbm{
    padding-top: 7px;
    padding-bottom: 0;
    font-size: 30px;
}

.net .dbm small{
    font-size: 24px;
}

.act{
    padding: 4px 0 0;
    line-height: 0;
}

.selected td{
    background: #404040;
    border-bottom-color: #5fb4e8;
    box-shadow: inset 0 2px #5fb4e8;
}

.selected .act{
    box-shadow: inset -2px 2px #5fb4e8;
}

.faded td{
    opacity: 0.3;
}

.sw{
    width: 27px;
    height: 27px;
    color: #fff;
    vertical-align: -5px;
}

.lock{
    width: 26px;
    height: 26px;
    vertical-align: -2px;
}

.scrollbar{
    width: 8px;
    background: #424242;
}

.thumb{
    height: 34%;
    background: #848484;
}

.bar-green{ --bar: #199b3c; }
.bar-orange{ --bar: #e76a10; }
.bar-lime{ --bar: #56a72b; }
.bar-yellow{ --bar: #f9bb03; }

.green{ color: #199b3c; }
.lime{ color: #56a72b; }
.orange{ color: #ee6f10; }
.yellow{ color: #f9bb03; }
.pink{ color: #e91e63; }
.dark{ color: #138013; }
.red{ color: #e00000; }
.gray{ color: #b3b3b3; }
.white{ color: #fff; }

/* tabs */
.tabs{
    display: flex;
    height: 109px;
    border-top: 15px solid #48335f;
    background: #121212;
}

.tabs button{
    display: flex;
    align-items: center;
    padding: 4px 24px 0;
    border-bottom: 4px solid transparent;
    color: #9e9e9e;
}

.tabs .active{
    color: #bb86fc;
    border-bottom-color: #bb86fc;
}

/* details */
.details{
    padding: 17px 16px 0 15px;
}

section{
    border-bottom: 2px solid #1c1c1c;
}

h2{
    color: #fff;
    font-size: 28px;
    font-weight: 400;
    line-height: 37px;
}

dl{
    display: flex;
    justify-content: space-between;
}

dt{
    color: #a6a6a6;
    line-height: 36px;
}

dd{
    padding-top: 4px;
    line-height: 35px;
    text-align: right;
}

.phy{
    padding-top: 7px;
}

.phy p:first-child{
    line-height: 37px;
}

.rx span{
    color: #f01460;
}

.tx span{
    color: #0c860c;
}

/* system navigation */
.navbar{
    display: grid;
    grid-template-columns: 51fr 64fr 64fr 64fr 49fr;
    height: 94px;
    flex: none;
}

.navbar button{
    display: flex;
    align-items: center;
    justify-content: center;
    padding-top: 2px;
}

.navbar .dock{
    justify-content: flex-start;
    padding-left: 58px;
}
```
